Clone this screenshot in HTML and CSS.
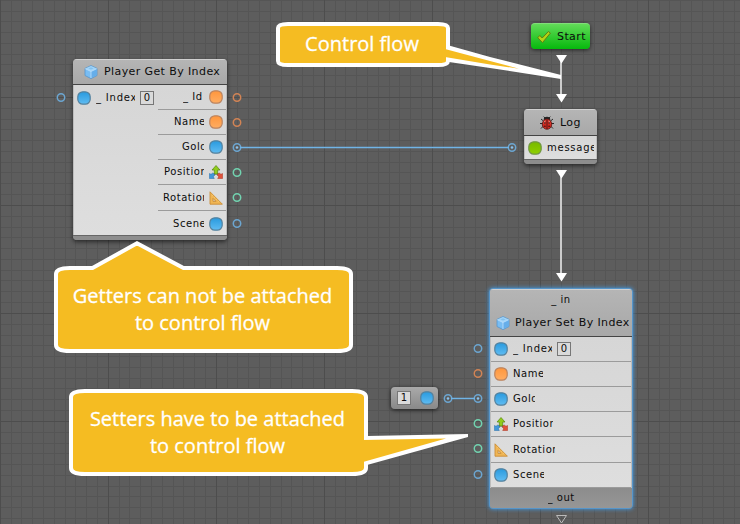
FILE: index.html
```html
<!DOCTYPE html>
<html lang="en">
<head>
<meta charset="utf-8">
<title>Player control flow</title>
<link rel="stylesheet" href="styles.css">
</head>
<body>
<svg class="defs" width="0" height="0" aria-hidden="true">
  <defs>
    <linearGradient id="blue" x1="0" y1="0" x2="0" y2="1"><stop offset="0" stop-color="#299ade"/><stop offset="1" stop-color="#60bcf2"/></linearGradient>
    <linearGradient id="orange" x1="0" y1="0" x2="0" y2="1"><stop offset="0" stop-color="#ff963c"/><stop offset="1" stop-color="#ffad62"/></linearGradient>
    <linearGradient id="green" x1="0" y1="0" x2="0" y2="1"><stop offset="0" stop-color="#78b900"/><stop offset="1" stop-color="#8fd000"/></linearGradient>
    <symbol id="i-blue" viewBox="0 0 14 14"><rect x=".8" y=".8" width="12.4" height="12.4" rx="5" fill="url(#blue)" stroke="#54819d" stroke-width="1.2"/></symbol>
    <symbol id="i-orange" viewBox="0 0 14 14"><rect x=".8" y=".8" width="12.4" height="12.4" rx="5" fill="url(#orange)" stroke="#bb8460" stroke-width="1.2"/></symbol>
    <symbol id="i-green" viewBox="0 0 14 14"><rect x=".8" y=".8" width="12.4" height="12.4" rx="5" fill="url(#green)" stroke="#719544" stroke-width="1.2"/></symbol>
    <symbol id="i-axes" viewBox="0 0 14 14">
      <path d="M7 8 3 11M7 8l4 3" stroke="#777" stroke-width="2"/>
      <path d="M7 .5 11 5H8.7v4H5.3V5H3z" fill="#91cc1b" stroke="#568513" stroke-width=".7"/>
      <path d="M.4 8.5 2 9.3l2-1.4 1.8 2-1.5 1.8 1 1.8H.4z" fill="#4198d9" stroke="#286ca8" stroke-width=".5"/>
      <path d="m13.6 8.5-1.6.8-2-1.4-1.8 2 1.5 1.8-1 1.8h4.9z" fill="#e1523b" stroke="#aa3423" stroke-width=".5"/>
    </symbol>
    <symbol id="i-ruler" viewBox="0 0 14 14">
      <path fill-rule="evenodd" d="M1 .8v12.4h12.4zM4 7.4l3 3H4z" fill="#f0b655" stroke="#c98d38" stroke-width=".9"/>
      <path d="m4.5 3.5-1 1m3 1-1 1m3 1-1 1m3 1-1 1" stroke="#ffdf98" stroke-width=".7"/>
    </symbol>
    <symbol id="i-cube" viewBox="0 0 14 14">
      <path d="M7 .6 13 3.4v7.1L7 13.6 1 10.5V3.4z" fill="#79bdf3" stroke="#5795cb" stroke-width=".8"/>
      <path d="M7 1 12.6 3.6 7 6.4 1.4 3.6z" fill="#a3d4f8"/>
      <path d="M7 6.6 12.6 4v6.3L7 13z" fill="#66aeea"/>
      <path d="M1.3 3.7 7 6.5l5.7-2.8M7 6.5V13" fill="none" stroke="#c0e2fc" stroke-width=".8"/>
      <path d="M4.5 3.4 7 2.3l2.5 1.1L7 4.6z" fill="#83c2ef"/>
    </symbol>
    <symbol id="i-bug" viewBox="0 0 14 14">
      <path d="M3.5 5 1 3M3 7.5H0M3.5 10 1 12.5M10.5 5 13 3M11 7.5h3M10.5 10l2.5 2.5M5 2 3.7.6M9 2 10.3.6" stroke="#292929" stroke-width="1"/>
      <ellipse cx="7" cy="3.2" rx="3.2" ry="2.4" fill="#242424"/>
      <ellipse cx="7" cy="8.2" rx="4.7" ry="5.1" fill="#d02a20" stroke="#5b1714" stroke-width=".8"/>
      <path d="M7 4v9" stroke="#3b1514" stroke-width=".8"/>
      <path d="m5 4.7-.8 3.1M9 4.7l.8 3.1" stroke="#f0aaa1" stroke-width=".9"/>
      <g fill="#33100e"><circle cx="4.7" cy="7" r=".8"/><circle cx="9.3" cy="7" r=".8"/><circle cx="4.9" cy="10.2" r=".8"/><circle cx="9.1" cy="10.2" r=".8"/></g>
    </symbol>
    <symbol id="i-check" viewBox="0 0 14 14"><path d="M.7 7.8 2.8 5.5 5.2 8 11.4 1.5l2 1.6L5.5 12.6z" fill="#b4d413" stroke="#607f13" stroke-width="1" stroke-linejoin="round"/></symbol>
  </defs>
</svg>
<main class="canvas">
  <svg class="layer" viewBox="0 0 740 524">
    <defs>
      <pattern id="grid" width="108" height="108" patternUnits="userSpaceOnUse" patternTransform="translate(0 97)">
        <path d="M11.5 0v108M21.5 0v108M32.5 0v108M43.5 0v108M54.5 0v108M65.5 0v108M75.5 0v108M86.5 0v108M97.5 0v108M0 11.5h108M0 22.5h108M0 32.5h108M0 43.5h108M0 54.5h108M0 65.5h108M0 75.5h108M0 86.5h108M0 97.5h108" stroke="#555"/>
        <path d="M.5 0v108M0 .5h108" stroke="#4d4d4d"/>
      </pattern>
    </defs>
    <rect width="740" height="524" fill="url(#grid)"/>
    <g fill="none" stroke-width="1.5">
      <g stroke="#6ca6d1"><circle cx="61" cy="97.5" r="3.7"/><circle cx="237" cy="147.5" r="3.7"/><circle cx="237" cy="223.5" r="3.7"/><circle cx="512" cy="147.5" r="3.7"/><circle cx="478" cy="348.5" r="3.7"/><circle cx="478" cy="398.5" r="3.7"/><circle cx="478" cy="474.5" r="3.7"/><circle cx="448" cy="398.5" r="3.7"/></g>
      <g stroke="#d28455"><circle cx="237" cy="97.5" r="3.7"/><circle cx="237" cy="122.5" r="3.7"/><circle cx="478" cy="373.5" r="3.7"/></g>
      <g stroke="#72d3b0"><circle cx="237" cy="172.5" r="3.7"/><circle cx="237" cy="197.5" r="3.7"/><circle cx="478" cy="423.5" r="3.7"/><circle cx="478" cy="448.5" r="3.7"/></g>
    </g>
    <path d="M240 147.5h269M451 398.5h24" stroke="#70b4e6" stroke-width="1.6"/>
    <g fill="#8ac2ed"><circle cx="237" cy="147.5" r="1.3"/><circle cx="512" cy="147.5" r="1.3"/><circle cx="448" cy="398.5" r="1.3"/><circle cx="478" cy="398.5" r="1.3"/></g>
    <path d="M561 60v36M561 176v99" stroke="#ccc" stroke-width="2"/>
    <path d="M556 55h11l-5.5 8.5zM556 94h11l-5.5 8.5zM556 170h11l-5.5 8.5zM556 273h11l-5.5 8.5z" fill="#fff"/>
    <path d="M556.5 515.5h10l-5 7.5z" fill="none" stroke="#bbb"/>
  </svg>

  <section class="node get-node">
    <header class="head"><svg class="icon"><use href="#i-cube"/></svg><span class="title">Player Get By Index</span></header>
    <div class="body split">
      <div class="row"><svg class="icon"><use href="#i-blue"/></svg><span class="label index">_ Index</span><span class="field">0</span></div>
      <div class="outputs">
        <div class="row"><span class="label id">_ Id</span><svg class="icon"><use href="#i-orange"/></svg></div>
        <div class="row"><span class="label name">Name</span><svg class="icon"><use href="#i-orange"/></svg></div>
        <div class="row"><span class="label gold">Gold</span><svg class="icon"><use href="#i-blue"/></svg></div>
        <div class="row"><span class="label pos">Position</span><svg class="icon"><use href="#i-axes"/></svg></div>
        <div class="row tall"><span class="label rot">Rotation</span><svg class="icon"><use href="#i-ruler"/></svg></div>
        <div class="row"><span class="label scene">Scene</span><svg class="icon"><use href="#i-blue"/></svg></div>
      </div>
    </div>
    <div class="foot"></div>
  </section>

  <div class="start"><svg class="icon"><use href="#i-check"/></svg><span class="title">Start</span></div>

  <section class="node log-node">
    <header class="head"><svg class="icon"><use href="#i-bug"/></svg><span class="title">Log</span></header>
    <div class="body"><div class="row"><svg class="icon"><use href="#i-green"/></svg><span class="label message">message</span></div></div>
    <div class="foot"></div>
  </section>

  <section class="node set-node">
    <header class="head"><span class="label flow">_ in</span><div class="head-line"><svg class="icon"><use href="#i-cube"/></svg><span class="title">Player Set By Index</span></div></header>
    <div class="body">
      <div class="row"><svg class="icon"><use href="#i-blue"/></svg><span class="label index">_ Index</span><span class="field">0</span></div>
      <div class="row"><svg class="icon"><use href="#i-orange"/></svg><span class="label name">Name</span></div>
      <div class="row"><svg class="icon"><use href="#i-blue"/></svg><span class="label gold">Gold</span></div>
      <div class="row"><svg class="icon"><use href="#i-axes"/></svg><span class="label pos">Position</span></div>
      <div class="row tall"><svg class="icon"><use href="#i-ruler"/></svg><span class="label rot">Rotation</span></div>
      <div class="row"><svg class="icon"><use href="#i-blue"/></svg><span class="label scene">Scene</span></div>
    </div>
    <footer class="out"><span class="label out-label">_ out</span></footer>
  </section>

  <div class="literal"><span class="field">1</span><svg class="icon"><use href="#i-blue"/></svg></div>

  <svg class="layer" viewBox="0 0 740 524">
    <g fill="#f5bc22" stroke="#fff" stroke-width="4">
      <path d="M288 24H438Q448 24 448 28V61Q448 65 438 65H288Q278 65 278 61V28Q278 24 288 24Z"/>
      <path d="M70 268H92.5L137 243.3 183.5 268H337Q351 268 351 274V345Q351 351 337 351H70Q56 351 56 345V274Q56 268 70 268Z"/>
      <path d="M85 391H352Q366 391 366 397V468Q366 474 352 474H85Q71 474 71 468V397Q71 391 85 391Z"/>
    </g>
    <path d="M449 45.5 490 57l71 18v4l-71-11-41-6zM367 436l101-2v3l-101 28z" fill="#fff"/>
    <path d="M445 49 490 61l29 7.7-29-4.2-45-7.5zM363 440l83-1.5L363 462z" fill="#f5bc22"/>
  </svg>
  <p class="callout c-control">Control flow</p>
  <p class="callout c-getters">Getters can not be attached<br>to control flow</p>
  <p class="callout c-setters">Setters have to be attached<br>to control flow</p>
</main>
</body>
</html>
```
FILE: styles.css
```css
* { box-sizing: border-box; }
body { margin: 0; }
.defs { position: absolute; }
.canvas {
  position: relative;
  width: 740px;
  height: 524px;
  overflow: hidden;
  background: #5d5d5d;
  color: #0c0c0c;
  font-family: "DejaVu Sans", sans-serif;
  font-size: 11px;
}
.layer { position: absolute; inset: 0; width: 740px; height: 524px; }
.icon { width: 14px; height: 14px; flex: none; display: block; }

.node {
  position: absolute;
  display: flex;
  flex-direction: column;
  border-radius: 4px;
  overflow: hidden;
  background: #8b8b8b;
  box-shadow: 0 2px 4px rgba(0, 0, 0, .55);
}
.head {
  display: flex;
  align-items: center;
  background: linear-gradient(#b5b5b5, #a8a8a8);
  border-top: 1px solid #d0d0d0;
  border-bottom: 1px solid #444;
}
.title { font-size: 11px; line-height: 14px; white-space: nowrap; letter-spacing: .4px; }
.body { background: linear-gradient(#d6d6d6, #dedede); border: solid #bdbdbd; border-width: 0 1px; }
.row { display: flex; align-items: center; height: 25px; border-bottom: 1px solid #9b9b9b; }
.row.tall { height: 26px; }
.label { display: block; overflow: hidden; white-space: nowrap; font-size: 10px; line-height: 14px; letter-spacing: .55px; }
.index { width: 39px; letter-spacing: .8px; }
.name { width: 30px; }
.gold { width: 22px; }
.pos { width: 40px; }
.rot { width: 42px; }
.scene { width: 31px; }
.id { width: 21px; }
.field {
  width: 14px;
  height: 14px;
  border: 1px solid #777;
  background: #dadada;
  font-size: 10px;
  line-height: 12px;
  text-align: center;
}
.foot { flex: 1; border-top: 1px solid #666; background: #8d8d8d; }

.get-node { left: 73px; top: 59px; width: 154px; height: 181px; }
.get-node .head { height: 26px; padding-left: 11px; gap: 6px; }
.split { display: flex; justify-content: space-between; height: 150px; }
.split > .row { border: 0; padding-left: 3px; }
.split .label { margin-left: 5px; }
.split > .row .field { margin-left: 5px; }
.outputs { width: 68px; }
.outputs .row { justify-content: flex-end; padding-right: 3px; gap: 5px; }
.outputs .row:last-child { border: 0; }

.start {
  position: absolute;
  left: 531px;
  top: 23px;
  width: 59px;
  height: 26px;
  display: flex;
  align-items: center;
  gap: 6px;
  padding-left: 6px;
  border-radius: 4px;
  border-top: 1px solid #82dd7a;
  background: linear-gradient(#62db58, #06b90d);
  box-shadow: 0 1px 4px rgba(0, 0, 0, .6);
}
.log-node { left: 524px; top: 109px; width: 73px; height: 55px; }
.log-node .head { height: 27px; padding-left: 16px; gap: 6px; }
.log-node .row { height: 23px; border: 0; padding-left: 3px; gap: 5px; }
.message { width: 47px; letter-spacing: .75px; }

.set-node { left: 489px; top: 288px; width: 144px; height: 221px; border: 1px solid #5695c9; box-shadow: 0 0 4px #3f9fef; }
.set-node .head { height: 48px; display: block; padding-top: 3px; }
.flow { text-align: center; }
.head-line { display: flex; align-items: center; gap: 5px; padding: 9px 0 0 6px; }
.set-node .row { padding-left: 3px; gap: 5px; }
.set-node .out { display: flex; justify-content: center; align-items: center; flex: 1; background: linear-gradient(#8c8c8c, #969696); }
.out-label { width: 27px; }

.literal {
  position: absolute;
  left: 391px;
  top: 387px;
  width: 47px;
  height: 22px;
  display: flex;
  align-items: center;
  gap: 9px;
  padding-left: 6px;
  border-radius: 4px;
  background: linear-gradient(#aaa, #898989);
  box-shadow: 0 1px 4px rgba(0, 0, 0, .7);
}
.callout {
  position: absolute;
  margin: 0;
  color: #fff;
  font-family: "Open Sans", sans-serif;
  font-size: 20px;
  -webkit-text-stroke: .3px #fff;
  line-height: 27px;
  text-align: center;
  white-space: nowrap;
}
.c-control { left: 276px; top: 30px; width: 172px; }
.c-getters { left: 54px; top: 282px; width: 297px; }
.c-setters { left: 69px; top: 405px; width: 297px; }
```
